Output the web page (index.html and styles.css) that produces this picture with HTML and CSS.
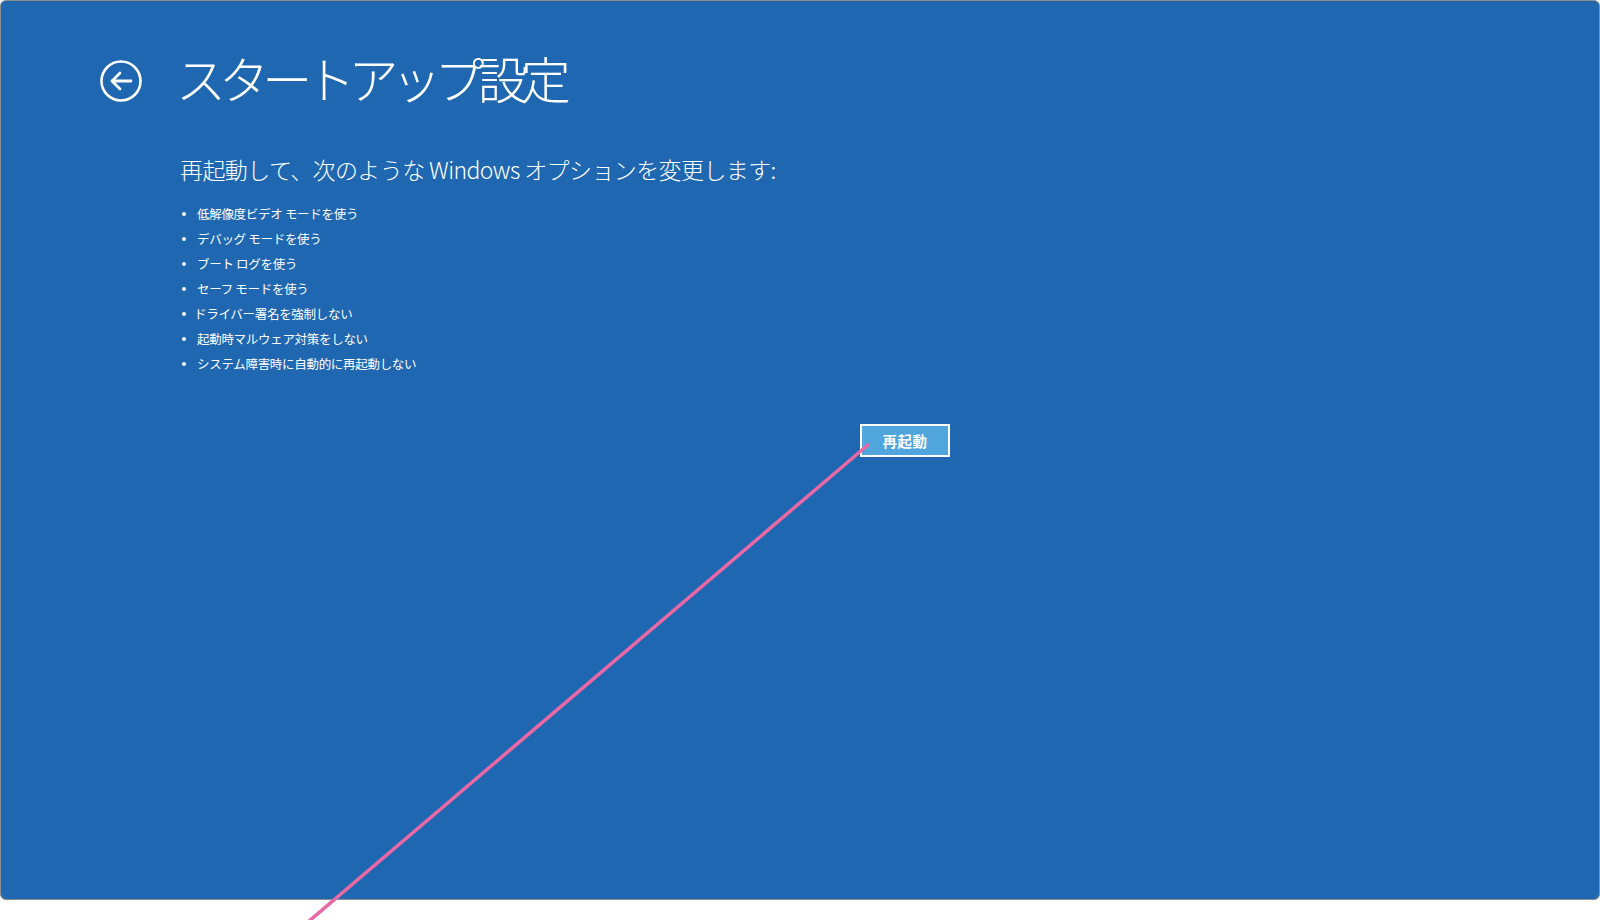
FILE: index.html
```html
<!DOCTYPE html>
<html lang="ja">
<head>
<meta charset="utf-8">
<title>スタートアップ設定</title>
<link rel="stylesheet" href="styles.css">
</head>
<body>
<div class="screen">
  <header class="header">
    <button class="back" aria-label="戻る">
      <svg width="42" height="42" viewBox="0 0 42 42">
        <circle cx="21" cy="21" r="19.5" fill="none" stroke="#fff" stroke-width="2.6"/>
        <path d="M12 21 H31 M20 13 L12 21 L20 29" fill="none" stroke="#fff" stroke-width="2.8" stroke-linecap="round" stroke-linejoin="round"/>
      </svg>
    </button>
    <h1 class="title">スタートアップ設定</h1>
  </header>
  <main class="content">
    <p class="lead">再起動して、次のような Windows オプションを変更します:</p>
    <ul class="options">
      <li>低解像度ビデオ モードを使う</li>
      <li>デバッグ モードを使う</li>
      <li>ブート ログを使う</li>
      <li>セーフ モードを使う</li>
      <li class="tight">ドライバー署名を強制しない</li>
      <li>起動時マルウェア対策をしない</li>
      <li>システム障害時に自動的に再起動しない</li>
    </ul>
    <div class="actions">
      <button class="restart">再起動</button>
    </div>
  </main>
</div>
<svg class="pointer" width="1600" height="920" viewBox="0 0 1600 920">
  <line x1="869" y1="444" x2="308" y2="922" stroke="#ea68a6" stroke-width="3.5"/>
</svg>
</body>
</html>
```
FILE: styles.css
```css
html, body {
  margin: 0;
  padding: 0;
  background: #ffffff;
}
body {
  width: 1600px;
  height: 920px;
  position: relative;
  overflow: hidden;
  font-family: "Noto Sans CJK JP", "Noto Sans", sans-serif;
  color: #ffffff;
}
.screen {
  box-sizing: border-box;
  width: 1600px;
  height: 900px;
  background: #1f67b1;
  border: 1px solid #8e8e8e;
  border-radius: 6px;
  padding: 0 0 0 99px;
}
.header {
  display: flex;
  align-items: flex-start;
  height: 154px;
}
.back {
  margin: 59px 0 0 0;
  padding: 0;
  border: 0;
  background: none;
  width: 42px;
  height: 42px;
  display: block;
}
.back svg {
  display: block;
}
.title {
  margin: 40px 0 0 34px;
  font-size: 50px;
  font-weight: 200;
  line-height: 72px;
  letter-spacing: -6.9px;
  white-space: nowrap;
}
.content {
  padding-left: 80px;
}
.lead {
  margin: 0;
  font-size: 23px;
  font-weight: 300;
  line-height: 28px;
  letter-spacing: -0.6px;
}
.options {
  margin: 18px 0 0 0;
  padding: 0;
  list-style: none;
  font-size: 12.5px;
  line-height: 25px;
}
.options li {
  position: relative;
  padding-left: 17px;
  letter-spacing: -0.3px;
}
.options li::before {
  content: "";
  position: absolute;
  left: 2px;
  top: 11px;
  width: 4px;
  height: 4px;
  border-radius: 50%;
  background: #ffffff;
}
.options li.tight {
  padding-left: 14px;
}
.actions {
  display: flex;
  margin: 48px 0 0 0;
  padding-left: 680px;
}
.restart {
  box-sizing: border-box;
  width: 90px;
  height: 33px;
  background: #4fa5dc;
  border: 2px solid #ffffff;
  color: #ffffff;
  font-family: "Noto Sans CJK JP", sans-serif;
  font-weight: 700;
  font-size: 14.5px;
  padding: 0;
  letter-spacing: 0.5px;
}
.pointer {
  position: absolute;
  left: 0;
  top: 0;
  pointer-events: none;
}
```
